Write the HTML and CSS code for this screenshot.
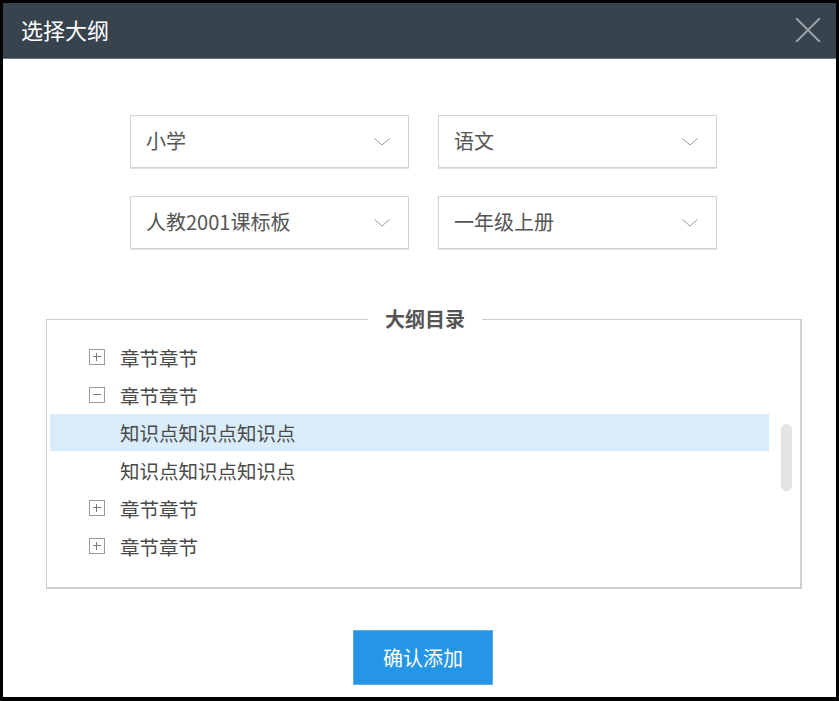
FILE: index.html
```html
<!DOCTYPE html>
<html lang="zh-CN">
<head>
<meta charset="utf-8">
<title>选择大纲</title>
<link rel="stylesheet" href="styles.css">
</head>
<body>
<div class="dialog">
  <div class="header">
    <span class="title">选择大纲</span>
    <svg class="close" width="26" height="24" viewBox="0 0 26 24"><path d="M1 0 L25 24 M25 0 L1 24" stroke="#9aa2a8" stroke-width="2" fill="none"/></svg>
  </div>
  <div class="selects">
    <div class="select"><span>小学</span><svg class="chev" width="16" height="8" viewBox="0 0 16 8"><path d="M0.5 0.5 L8 7 L15.5 0.5" stroke="#999" stroke-width="1" fill="none"/></svg></div>
    <div class="select"><span>语文</span><svg class="chev" width="16" height="8" viewBox="0 0 16 8"><path d="M0.5 0.5 L8 7 L15.5 0.5" stroke="#999" stroke-width="1" fill="none"/></svg></div>
    <div class="select"><span>人教2001课标板</span><svg class="chev" width="16" height="8" viewBox="0 0 16 8"><path d="M0.5 0.5 L8 7 L15.5 0.5" stroke="#999" stroke-width="1" fill="none"/></svg></div>
    <div class="select"><span>一年级上册</span><svg class="chev" width="16" height="8" viewBox="0 0 16 8"><path d="M0.5 0.5 L8 7 L15.5 0.5" stroke="#999" stroke-width="1" fill="none"/></svg></div>
  </div>
  <fieldset class="outline">
    <legend>大纲目录</legend>
    <div class="tree">
      <div class="row chapter"><span class="tog plus"></span><span>章节章节</span></div>
      <div class="row chapter"><span class="tog minus"></span><span>章节章节</span></div>
      <div class="row point active"><span>知识点知识点知识点</span></div>
      <div class="row point"><span>知识点知识点知识点</span></div>
      <div class="row chapter"><span class="tog plus"></span><span>章节章节</span></div>
      <div class="row chapter"><span class="tog plus"></span><span>章节章节</span></div>
    </div>
    <div class="scrollbar"></div>
  </fieldset>
  <button class="confirm">确认添加</button>
</div>
</body>
</html>
```

FILE: styles.css
```css
* { box-sizing: border-box; }
html, body { margin: 0; padding: 0; }
body {
  background: #000;
  width: 839px;
  height: 701px;
  padding: 3px 0 0 3px;
  font-family: "Noto Sans CJK SC", "Noto Sans", sans-serif;
  overflow: hidden;
}
.dialog {
  width: 833px;
  height: 694px;
  background: #fff;
  display: flex;
  flex-direction: column;
}
.header {
  height: 56px;
  background: #37434d;
  border-bottom: 1px solid #6e787f;
  display: flex;
  align-items: center;
  justify-content: space-between;
  padding: 0 15px 4px 18px;
}
.title {
  color: #fff;
  font-size: 22px;
  line-height: 1;
}
.close { display: block; margin-top: 2px; }
.selects {
  margin: 56px 0 0 127px;
  display: grid;
  grid-template-columns: 279px 279px;
  grid-auto-rows: 53px;
  column-gap: 29px;
  row-gap: 28px;
}
.select {
  border: 1px solid #d4d4d4;
  box-shadow: 0 1px 0 #e0e0e0;
  display: flex;
  align-items: center;
  justify-content: space-between;
  padding: 0 18px 2px 15px;
  color: #555;
  font-size: 20px;
}
.chev { display: block; margin-top: 2px; }
.outline {
  margin: 60px 0 0 43px;
  width: 756px;
  height: 280px;
  border: 1px solid #cfcfcf;
  border-right-width: 2px;
  border-bottom-width: 2px;
  padding: 9px 0 0 3px;
  position: relative;
  min-width: 0;
}
.outline legend {
  margin: 0 auto;
  padding: 0 17px;
  font-size: 20px;
  font-weight: bold;
  color: #555;
  line-height: 1;
}
.tree {
  width: 719px;
  display: flex;
  flex-direction: column;
}
.row {
  height: 38px;
  display: flex;
  align-items: center;
  font-size: 19.5px;
  color: #4a4a4a;
}
.row.chapter { padding-left: 39px; gap: 15px; }
.row.point { padding-left: 70px; }
.row.active { background: #d9ecfc; height: 37px; }
.tog {
  width: 16px;
  height: 16px;
  border: 1px solid #9a9a9a;
  position: relative;
  flex: none;
}
.tog::before {
  content: "";
  position: absolute;
  left: 3px;
  right: 3px;
  top: 6px;
  height: 1px;
  background: #777;
}
.tog.plus::after {
  content: "";
  position: absolute;
  top: 3px;
  bottom: 3px;
  left: 6px;
  width: 1px;
  background: #777;
}
.scrollbar {
  position: absolute;
  left: 734px;
  top: 95px;
  width: 11px;
  height: 67px;
  border-radius: 6px;
  background: #e4e4e4;
}
.confirm {
  margin: 41px 0 0 350px;
  width: 140px;
  height: 55px;
  border: 1px solid #5aaeea;
  background: #2596e5;
  color: #fff;
  font-family: inherit;
  font-size: 20px;
  padding: 0;
}
```
